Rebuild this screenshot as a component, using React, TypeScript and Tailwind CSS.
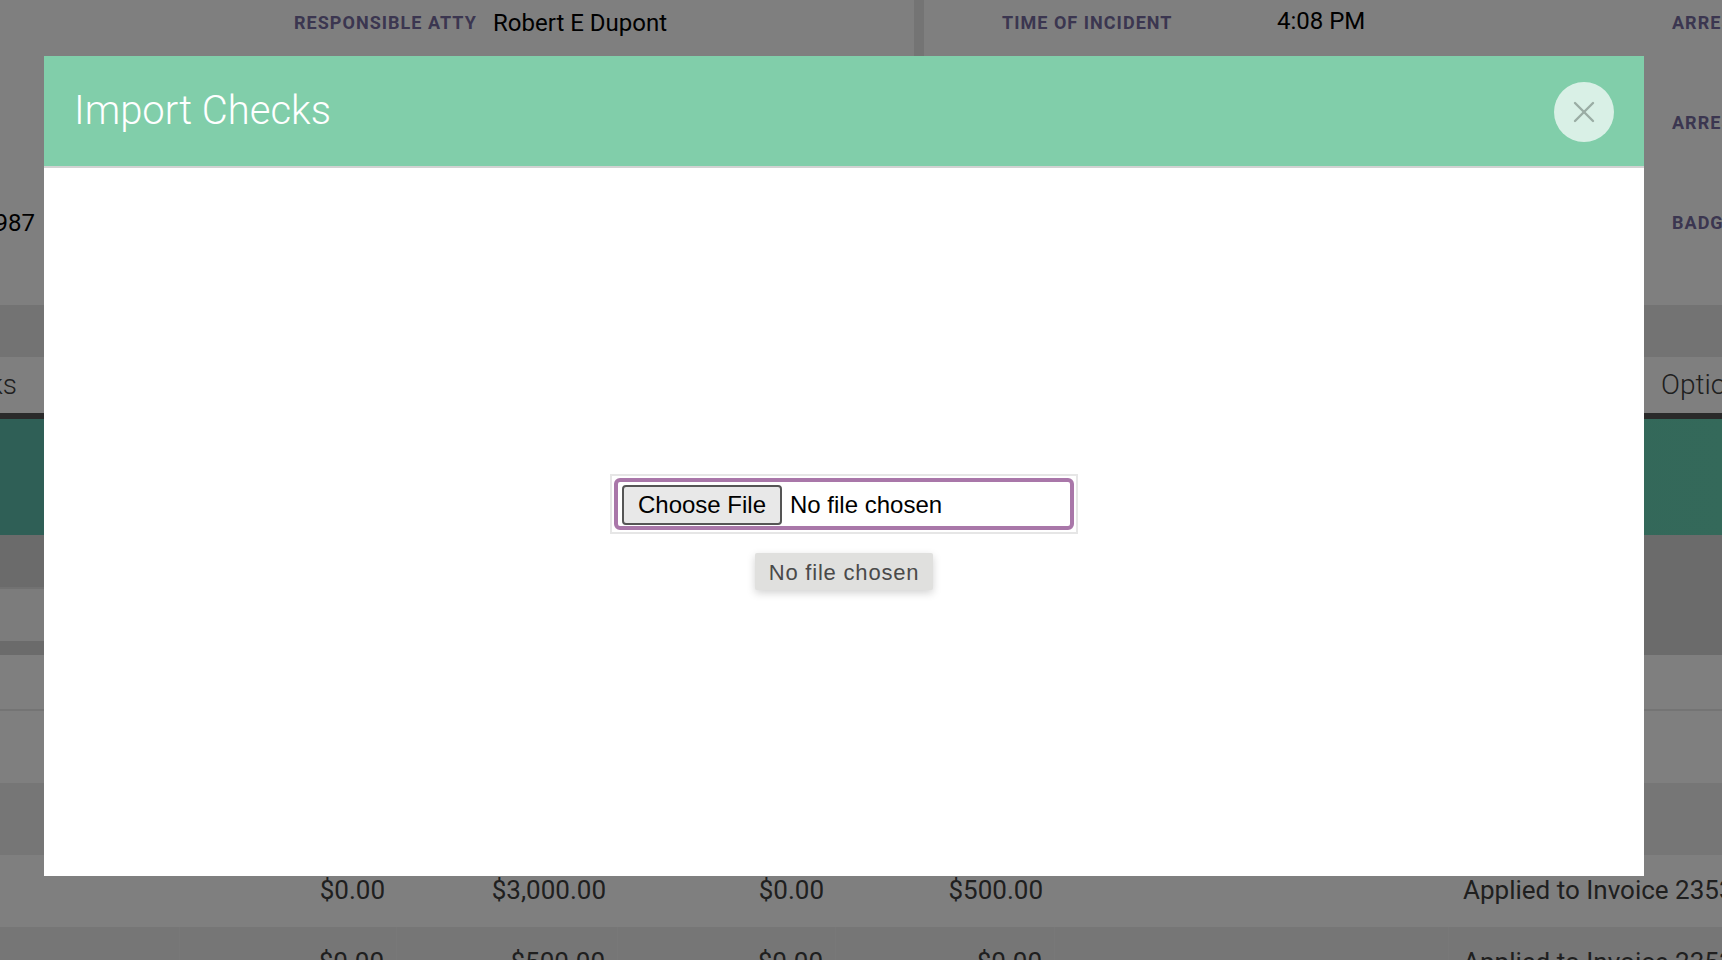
import { X } from 'lucide-react';

const labelClass = "font-['Roboto',sans-serif] font-bold text-[18px] tracking-[1.03px] text-[#766ca0] whitespace-nowrap -translate-y-[1px]";
const valueClass = "font-['Roboto',sans-serif] text-[24px] text-black whitespace-nowrap";
const cellClass = 'flex items-center justify-end pr-3 pb-[2px] border-r border-[#f0f0f0]';

function PaymentRow({ amounts, note, shaded }: { amounts: string[]; note: string; shaded?: boolean }) {
  return (
    <div
      className={`grid h-[72px] shrink-0 grid-cols-[180px_217px_221px_218px_219px_394px_1fr] font-['Roboto',sans-serif] text-[26px] text-[#3e3e3e] ${
        shaded ? 'bg-[#ececec]' : 'bg-white'
      }`}
    >
      <div className={shaded ? 'border-r border-[#f0f0f0]' : ''} />
      {amounts.map((amount, i) => (
        <div key={i} className={shaded ? cellClass : 'flex items-center justify-end pr-3 pb-[2px]'}>
          {amount}
        </div>
      ))}
      <div className={shaded ? 'border-r border-[#f0f0f0]' : ''} />
      <div className="flex items-center whitespace-nowrap pb-[2px] pl-[14px]">{note}</div>
    </div>
  );
}

function CaseDetails() {
  return (
    <div className="flex h-[305px] shrink-0 bg-white">
      <div className="flex w-[914px] shrink-0 flex-col gap-[56px] pt-[1px]">
        <div className="flex h-[44px] items-center pl-[294px]">
          <span className={`${labelClass} w-[199px]`}>RESPONSIBLE ATTY</span>
          <span className={valueClass}>Robert E Dupont</span>
        </div>
        <div className="h-[44px]" />
        <div className="flex h-[44px] w-[35px] items-center justify-end">
          <span className={valueClass}>987</span>
        </div>
      </div>
      <div className="w-[10px] shrink-0 bg-[#e8e8e8]" />
      <div className="flex flex-1 flex-col gap-[56px] overflow-hidden pt-[1px]">
        <div className="flex h-[44px] items-center pl-[78px]">
          <span className={`${labelClass} w-[275px] shrink-0`}>TIME OF INCIDENT</span>
          <span className={`${valueClass} w-[395px] shrink-0 -translate-y-[2px]`}>4:08 PM</span>
          <span className={labelClass}>ARREST DATE</span>
        </div>
        <div className="flex h-[44px] items-center pl-[748px]">
          <span className={labelClass}>ARREST TIME</span>
        </div>
        <div className="flex h-[44px] items-center pl-[748px]">
          <span className={labelClass}>BADGE</span>
        </div>
      </div>
    </div>
  );
}

function ImportChecksModal() {
  return (
    <div className="fixed inset-0 overflow-hidden bg-black/50 pl-[44px] pt-[56px]">
      <div className="flex h-[820px] w-[1600px] flex-col bg-white">
        <div className="flex h-[112px] shrink-0 items-center justify-between border-b-2 border-[#d2d2d2] bg-[#81ceaa] pl-[30px] pr-[30px]">
          <h2 className="font-['Roboto',sans-serif] text-[40px] font-light text-white">Import Checks</h2>
          <button className="mt-[2px] flex h-[60px] w-[60px] items-center justify-center rounded-full bg-[#d9f0e6]">
            <X size={36} strokeWidth={1.6} className="text-[#9aada4]" />
          </button>
        </div>
        <div className="flex flex-1 flex-col items-center justify-center pt-[20px]">
          <div className="w-[468px] border-2 border-[#e6e6e6] p-[2px]">
            <div className="flex h-[52px] items-center rounded-[6px] border-[4px] border-[#a977a9] pl-[4px] pt-[2px]">
              <input
                type="file"
                className="w-full font-['Liberation_Sans',sans-serif] text-[24px] leading-none text-black file:mr-2 file:h-[40px] file:w-[160px] file:rounded-[4px] file:border-2 file:border-solid file:border-[#555555] file:bg-[#e8e8e8] file:text-[24px] file:text-black"
              />
            </div>
          </div>
          <button className="mt-[19px] h-[37px] w-[178px] rounded-[2px] bg-[#e0e0de] pt-[2px] font-['Liberation_Sans',sans-serif] text-[22px] tracking-[0.8px] text-[#4a4a4a] shadow-[0_3px_8px_rgba(0,0,0,0.18)]">
            No file chosen
          </button>
        </div>
      </div>
    </div>
  );
}

export default function App() {
  return (
    <div className="flex h-screen w-full flex-col overflow-hidden bg-white">
      <CaseDetails />
      <div className="h-[52px] shrink-0 bg-[#e6e6e6]" />
      <div className="flex h-[56px] shrink-0 items-center justify-between bg-[#fefefe] font-['Roboto',sans-serif] text-[28px] font-light text-[#3e3e3e]">
        <div className="flex w-[17px] justify-end whitespace-nowrap">Checks</div>
        <div className="w-[61px] overflow-hidden whitespace-nowrap">Options</div>
      </div>
      <div className="h-[6px] shrink-0 bg-[#545454]" />
      <div className="h-[116px] shrink-0 bg-linear-to-r from-[#5ebeac] to-[#68d2b4]" />
      <div className="h-[52px] shrink-0 bg-[#d6d6d6]" />
      <div className="flex h-[68px] shrink-0">
        <div className="flex flex-1 flex-col">
          <div className="h-[2px] bg-[#e4e4e4]" />
          <div className="h-[52px] bg-[#f8f8f8]" />
          <div className="h-[14px] bg-[#d6d6d6]" />
        </div>
        <div className="w-[78px] bg-[#d6d6d6]" />
      </div>
      <div className="h-[54px] shrink-0 bg-white" />
      <div className="h-[2px] shrink-0 bg-[#e8e8e8]" />
      <div className="h-[72px] shrink-0 bg-white" />
      <div className="h-[72px] shrink-0 bg-[#ececec]" />
      <PaymentRow amounts={['$0.00', '$3,000.00', '$0.00', '$500.00']} note="Applied to Invoice 2353" />
      <PaymentRow amounts={['$0.00', '$500.00', '$0.00', '$0.00']} note="Applied to Invoice 2353" shaded />
      <ImportChecksModal />
    </div>
  );
}
